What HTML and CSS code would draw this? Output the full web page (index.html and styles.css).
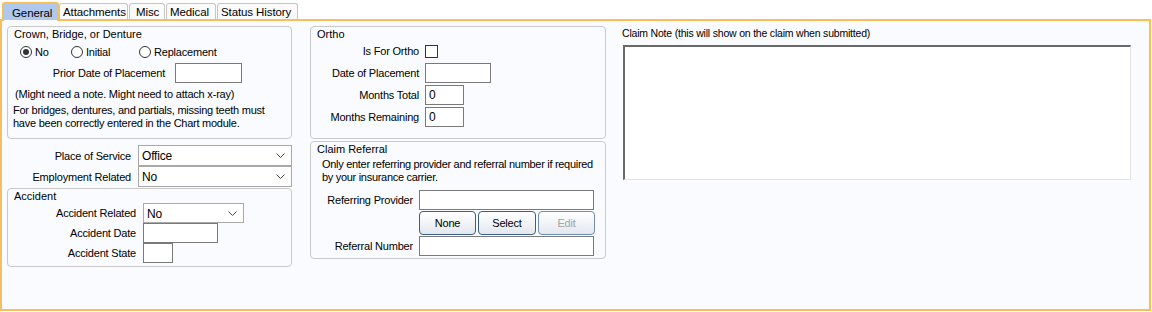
FILE: index.html
```html
<!DOCTYPE html>
<html lang="en">
<head>
    <meta charset="UTF-8">
    <title>Claim - General</title>
    <link rel="stylesheet" href="styles.css">
</head>
<body>

    <div class="tabs">
        <div class="tab active">General</div>
        <div class="tab t-attach">Attachments</div>
        <div class="tab t-misc">Misc</div>
        <div class="tab t-med">Medical</div>
        <div class="tab t-hist">Status History</div>
    </div>

    <div class="panel">

        <!-- left column -->
        <div class="col col-left">
            <div class="group crown">
                <div class="g-title">Crown, Bridge, or Denture</div>
                <div class="radios">
                    <div class="radio r-no"><span class="circle checked"></span>No</div>
                    <div class="radio r-init"><span class="circle"></span>Initial</div>
                    <div class="radio"><span class="circle"></span>Replacement</div>
                </div>
                <div class="row prior">
                    <span class="lbl">Prior Date of Placement</span>
                    <span class="tb w-prior"></span>
                </div>
                <div class="hint">(Might need a note. Might need to attach x-ray)</div>
                <div class="hint2">For bridges, dentures, and partials, missing teeth must<br>have been correctly entered in the Chart module.</div>
            </div>

            <div class="row place p-first">
                <span class="lbl">Place of Service</span>
                <span class="combo w-place">Office
                    <svg class="chev" width="9" height="5" viewBox="0 0 9 5"><polyline points="0.5,0.5 4.5,4.5 8.5,0.5" fill="none" stroke="#444" stroke-width="1"/></svg>
                </span>
            </div>
            <div class="row place">
                <span class="lbl">Employment Related</span>
                <span class="combo w-place">No
                    <svg class="chev" width="9" height="5" viewBox="0 0 9 5"><polyline points="0.5,0.5 4.5,4.5 8.5,0.5" fill="none" stroke="#444" stroke-width="1"/></svg>
                </span>
            </div>

            <div class="group accident">
                <div class="g-title">Accident</div>
                <div class="row acc">
                    <span class="lbl">Accident Related</span>
                    <span class="combo w-acc">No
                        <svg class="chev" width="9" height="5" viewBox="0 0 9 5"><polyline points="0.5,0.5 4.5,4.5 8.5,0.5" fill="none" stroke="#444" stroke-width="1"/></svg>
                    </span>
                </div>
                <div class="row acc">
                    <span class="lbl">Accident Date</span>
                    <span class="tb w-accdate"></span>
                </div>
                <div class="row acc">
                    <span class="lbl">Accident State</span>
                    <span class="tb w-state"></span>
                </div>
            </div>
        </div>

        <!-- middle column -->
        <div class="col col-mid">
            <div class="group ortho">
                <div class="g-title">Ortho</div>
                <div class="row o-check">
                    <span class="lbl">Is For Ortho</span>
                    <span class="checkbox"></span>
                </div>
                <div class="row o-row o-first">
                    <span class="lbl">Date of Placement</span>
                    <span class="tb w-odate"></span>
                </div>
                <div class="row o-row">
                    <span class="lbl">Months Total</span>
                    <span class="tb w-months">0</span>
                </div>
                <div class="row o-row">
                    <span class="lbl">Months Remaining</span>
                    <span class="tb w-months">0</span>
                </div>
            </div>

            <div class="group referral">
                <div class="g-title">Claim Referral</div>
                <div class="ref-text">Only enter referring provider and referral number if required<br>by your insurance carrier.</div>
                <div class="row r-row r-first">
                    <span class="lbl">Referring Provider</span>
                    <span class="tb w-ref"></span>
                </div>
                <div class="buttons">
                    <button class="btn b-none">None</button>
                    <button class="btn b-select">Select</button>
                    <button class="btn b-edit" disabled>Edit</button>
                </div>
                <div class="row r-row">
                    <span class="lbl">Referral Number</span>
                    <span class="tb w-ref"></span>
                </div>
            </div>
        </div>

        <!-- right column -->
        <div class="col col-right">
            <div class="note-lbl">Claim Note (this will show on the claim when submitted)</div>
            <div class="note-box"></div>
        </div>

    </div>

</body>
</html>
```

FILE: styles.css
```css
body {
    margin: 0;
    font-family: 'Liberation Sans', Arial, sans-serif;
    font-size: 11px;
    letter-spacing: -0.2px;
    color: #000;
    background-color: #fff;
    width: 1152px;
    height: 312px;
    overflow: hidden;
}

/* tab strip */
.tabs {
    display: flex;
    align-items: flex-end;
    height: 19px;
    padding-left: 2px;
    position: relative;
    z-index: 2;
}

.tab {
    box-sizing: border-box;
    height: 16px;
    line-height: 16px;
    border: 1px solid #c6c6c6;
    border-bottom: none;
    border-radius: 3px 3px 0 0;
    background-color: #fbfbfb;
    padding-left: 3px;
    font-size: 11.5px;
    letter-spacing: -0.1px;
    margin-right: 1px;
    white-space: nowrap;
}

.tab.active {
    height: 19px;
    margin-bottom: -2px;
    width: 57px;
    padding-left: 8px;
    line-height: 19px;
    border: 2px solid #f9be5a;
    border-bottom: none;
    background: linear-gradient(#afc8ee 16px, #f9fbfe 16px);
    margin-right: 0;
}

.t-attach { width: 69px; }
.t-misc { width: 36px; padding-left: 6px; }
.t-med { width: 50px; }
.t-hist { width: 81px; }

/* main panel */
.panel {
    box-sizing: border-box;
    width: 1151px;
    height: 292px;
    border: 2px solid #f9be5a;
    background-color: #f9fbfe;
    padding: 5px 0 0 5px;
    display: flex;
    align-items: flex-start;
}

.col-left {
    width: 285px;
    margin-right: 18px;
}

.col-mid {
    width: 296px;
    margin-right: 16px;
}

.col-right {
    width: 508px;
}

/* group boxes */
.group {
    box-sizing: border-box;
    border: 1px solid #c9c9c9;
    border-radius: 4px;
    padding: 1px 6px 0 6px;
    line-height: 13px;
}

.g-title {
    height: 13px;
    letter-spacing: 0;
}

.row {
    display: flex;
    align-items: center;
}

.lbl {
    text-align: right;
    white-space: nowrap;
}

.tb {
    box-sizing: border-box;
    display: block;
    height: 20px;
    border: 1px solid #7a7a7a;
    background-color: #fff;
    padding: 3px 0 0 3px;
    font-size: 12px;
    line-height: 13px;
}

.combo {
    box-sizing: border-box;
    position: relative;
    display: block;
    height: 20px;
    border: 1px solid #a9a9a9;
    background-color: #fff;
    padding: 4px 0 0 3px;
    font-size: 12px;
    line-height: 13px;
}

.chev {
    position: absolute;
    right: 6px;
    top: 7px;
}

/* crown */
.crown {
    height: 113px;
}

.radios {
    display: flex;
    margin-top: 4px;
    height: 14px;
}

.radio {
    display: flex;
    align-items: center;
}

.r-no {
    width: 51px;
    margin-left: 6px;
}

.r-init {
    width: 68px;
}

.circle {
    box-sizing: border-box;
    width: 12px;
    height: 12px;
    border: 1px solid #333;
    border-radius: 50%;
    background-color: #fff;
    margin-right: 3px;
    position: relative;
}

.circle.checked::after {
    content: '';
    position: absolute;
    left: 2px;
    top: 2px;
    width: 6px;
    height: 6px;
    border-radius: 50%;
    background-color: #333;
}

.prior {
    margin-top: 4px;
}

.prior .lbl {
    width: 151px;
    margin-right: 10px;
}

.w-prior { width: 67px; }

.hint {
    margin-top: 5px;
    margin-left: 1px;
}

.hint2 {
    margin-top: 3px;
    margin-left: -1px;
    letter-spacing: -0.25px;
}

/* place of service */
.place .lbl {
    width: 124px;
    margin-right: 7px;
}

.p-first {
    margin-top: 6px;
}

.w-place { width: 154px; height: 21px; }

/* accident */
.accident {
    height: 79px;
    margin-top: 1px;
}

.acc .lbl {
    width: 122px;
    margin-right: 7px;
}

.w-acc { width: 101px; }
.w-accdate { width: 75px; }
.w-state { width: 30px; }

/* ortho */
.ortho {
    height: 113px;
}

.o-check {
    margin-top: 3px;
    height: 14px;
}

.o-check .lbl,
.o-row .lbl {
    width: 102px;
    margin-right: 6px;
}

.checkbox {
    box-sizing: border-box;
    width: 13px;
    height: 13px;
    border: 1px solid #333;
    background-color: #fff;
}

.o-row {
    margin-top: 2px;
}

.o-first {
    margin-top: 5px;
}

.w-odate { width: 66px; }
.w-months { width: 39px; }

/* claim referral */
.referral {
    height: 118px;
    margin-top: 2px;
}

.ref-text {
    margin-top: 2px;
    margin-left: 5px;
    white-space: nowrap;
    letter-spacing: -0.3px;
}

.r-row {
    margin-top: 1px;
}

.r-first {
    margin-top: 6px;
}

.r-row .lbl {
    width: 96px;
    margin-right: 6px;
}

.w-ref { width: 175px; }

.buttons {
    display: flex;
    margin: 1px 0 0 102px;
}

.btn {
    box-sizing: border-box;
    height: 24px;
    border: 1px solid #3d5f85;
    border-radius: 4px;
    background: linear-gradient(#ffffff, #e3e8ef);
    font-family: 'Liberation Sans', Arial, sans-serif;
    font-size: 11px;
    letter-spacing: -0.2px;
    color: #000;
    padding: 0;
}

.b-none { width: 57px; margin-right: 2px; }
.b-select { width: 58px; margin-right: 2px; }
.b-edit {
    width: 57px;
    color: #a3a3a3;
    border-color: #6f8dae;
}

/* claim note */
.note-lbl {
    margin-top: 1px;
    line-height: 13px;
    font-size: 10.5px;
    letter-spacing: -0.2px;
}

.note-box {
    box-sizing: border-box;
    margin-top: 5px;
    margin-left: 1px;
    width: 508px;
    height: 135px;
    background-color: #fff;
    border: 1px solid #e3e3e3;
    border-top: 2px solid #696969;
    border-left: 2px solid #696969;
}
```
